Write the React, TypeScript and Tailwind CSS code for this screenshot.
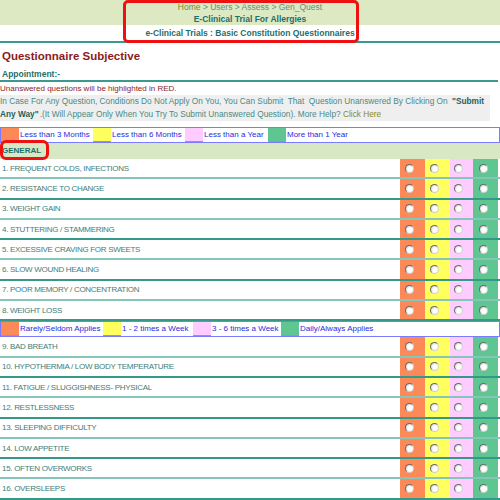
const font = { fontFamily: '"Liberation Sans", Arial, sans-serif' };

const groupOne = [
  '1. FREQUENT COLDS, INFECTIONS',
  '2. RESISTANCE TO CHANGE',
  '3. WEIGHT GAIN',
  '4. STUTTERING / STAMMERING',
  '5. EXCESSIVE CRAVING FOR SWEETS',
  '6. SLOW WOUND HEALING',
  '7. POOR MEMORY / CONCENTRATION',
  '8. WEIGHT LOSS',
];

const groupTwo = [
  '9. BAD BREATH',
  '10. HYPOTHERMIA / LOW BODY TEMPERATURE',
  '11. FATIGUE / SLUGGISHNESS- PHYSICAL',
  '12. RESTLESSNESS',
  '13. SLEEPING DIFFICULTY',
  '14. LOW APPETITE',
  '15. OFTEN OVERWORKS',
  '16. OVERSLEEPS',
];

function Radio() {
  return (
    <span className="block w-[9px] h-[9px] rounded-full border border-t-[#6a6a6a] border-l-[#6a6a6a] border-b-[#d0d0d0] border-r-[#d0d0d0] bg-[radial-gradient(circle_at_60%_60%,#ffffff_35%,#c4c4c4_100%)]" />
  );
}

function QuestionRow({ label, index }: { label: string; index: number }) {
  return (
    <div
      className={`flex h-[20.3px] border-b-2 ${
        index % 2 === 0 ? 'border-[#86c6ba]' : 'border-[#35998a]'
      }`}
    >
      <div className="flex-1 flex items-center pl-[2px] pt-[1px] text-[8px] tracking-[-0.3px] text-[#3f7d78]">
        {label}
      </div>
      <div className="w-[25px] bg-[#fb8a58] flex items-center pl-[5px]">
        <Radio />
      </div>
      <div className="w-[25px] bg-[#ffff5e] flex items-center pl-[5px]">
        <Radio />
      </div>
      <div className="w-[23px] bg-[#ffccff] flex items-center pl-[4px]">
        <Radio />
      </div>
      <div className="w-[25px] bg-[#5fc591] flex items-center pl-[6px]">
        <Radio />
      </div>
      <div className="w-[2px]" />
    </div>
  );
}

function Legend({ items }: { items: { color: string; label: string; width: string }[] }) {
  return (
    <div className="flex h-[16px] border border-[#7b7bff] text-[8px] text-[#2b2bdd] items-stretch">
      {items.map((item) => (
        <div key={item.label} className="flex items-stretch">
          <span className={`w-[18px] ${item.color} border-b border-[#9a9a9a]`} />
          <span className={`flex items-center pl-[1px] ${item.width}`}>{item.label}</span>
        </div>
      ))}
    </div>
  );
}

export default function App() {
  return (
    <div className="relative w-[500px] h-[500px] overflow-hidden bg-white" style={font}>
      {/* Header */}
      <div className="h-[25px] bg-[#dce9c2] flex flex-col items-center pt-[1px]">
        <div className="text-[8.5px] leading-[12px] text-[#5f8f8a]">
          <span className="text-[#7b8b2b]">Home</span> &gt; Users &gt; Assess &gt; Gen_Quest
        </div>
        <div className="text-[8.5px] leading-[12px] font-bold text-[#1e6f6b]">
          E-Clinical Trial For Allergies
        </div>
      </div>
      <div className="h-[18px] flex items-center justify-center pt-[1px] border-b-2 border-[#3a9a90] text-[8.5px] font-bold text-[#1e6f6b]">
        e-Clinical Trials : Basic Constitution Questionnaires
      </div>

      {/* Title */}
      <div className="h-[24px] flex items-center pl-[2px] pt-[3px] text-[11.5px] font-bold text-[#8b1c1c]">
        Questionnaire Subjective
      </div>
      <div className="h-[15px] mr-[2px] flex items-center pl-[2px] pt-[2px] border-b-2 border-[#3a9a90] text-[8.5px] font-bold text-[#1e6f6b]">
        Appointment:-
      </div>
      <div className="h-[13px] flex items-center pt-[1px] text-[8px] text-[#8b1c1c]">
        Unanswered questions will be highlighted in RED.
      </div>
      <div className="w-[490px] h-[26px] bg-[#efefef] text-[8.3px] text-[#4a8a86] flex flex-col">
        <div className="h-[13px] flex items-center whitespace-nowrap">
          In Case For Any Question, Conditions Do Not Apply On You, You Can Submit&nbsp; That&nbsp; Question
          Unanswered By Clicking On&nbsp; <b className="ml-[2px] text-[#1e5f5b]">"Submit</b>
        </div>
        <div className="h-[13px] flex items-center whitespace-nowrap">
          <b className="mr-[1px] text-[#1e5f5b]">Any Way"</b>.(It Will Appear Only When You Try To Submit
          Unanswered Question). More Help?&nbsp;<span className="text-[#8a8a1a]">Click Here</span>
        </div>
      </div>

      <div className="h-[6px]" />
      <Legend
        items={[
          { color: 'bg-[#fb8a58]', label: 'Less than 3 Months', width: 'w-[74px]' },
          { color: 'bg-[#ffff5e]', label: 'Less than 6 Months', width: 'w-[74px]' },
          { color: 'bg-[#ffccff]', label: 'Less than a Year', width: 'w-[65px]' },
          { color: 'bg-[#5fc591]', label: 'More than 1 Year', width: 'w-[70px]' },
        ]}
      />

      <div className="h-[16px] bg-[#d8e8c4] flex items-center pl-[2px] text-[8px] font-bold text-[#1e6f6b]">
        GENERAL
      </div>

      {groupOne.map((q, i) => (
        <QuestionRow key={q} label={q} index={i} />
      ))}

      <Legend
        items={[
          { color: 'bg-[#fb8a58]', label: 'Rarely/Seldom Applies', width: 'w-[84px]' },
          { color: 'bg-[#ffff5e]', label: '1 - 2 times a Week', width: 'w-[72px]' },
          { color: 'bg-[#ffccff]', label: '3 - 6 times a Week', width: 'w-[70px]' },
          { color: 'bg-[#5fc591]', label: 'Daily/Always Applies', width: 'w-[82px]' },
        ]}
      />

      {groupTwo.map((q, i) => (
        <QuestionRow key={q} label={q} index={i} />
      ))}

      {/* Highlight annotations */}
      <div className="absolute left-[123px] top-0 w-[236px] h-[43px] border-[3px] border-[#ee1111] rounded-[5px]" />
      <div className="absolute left-0 top-[140px] w-[49px] h-[20px] border-[3px] border-[#ee1111] rounded-[6px]" />
    </div>
  );
}
